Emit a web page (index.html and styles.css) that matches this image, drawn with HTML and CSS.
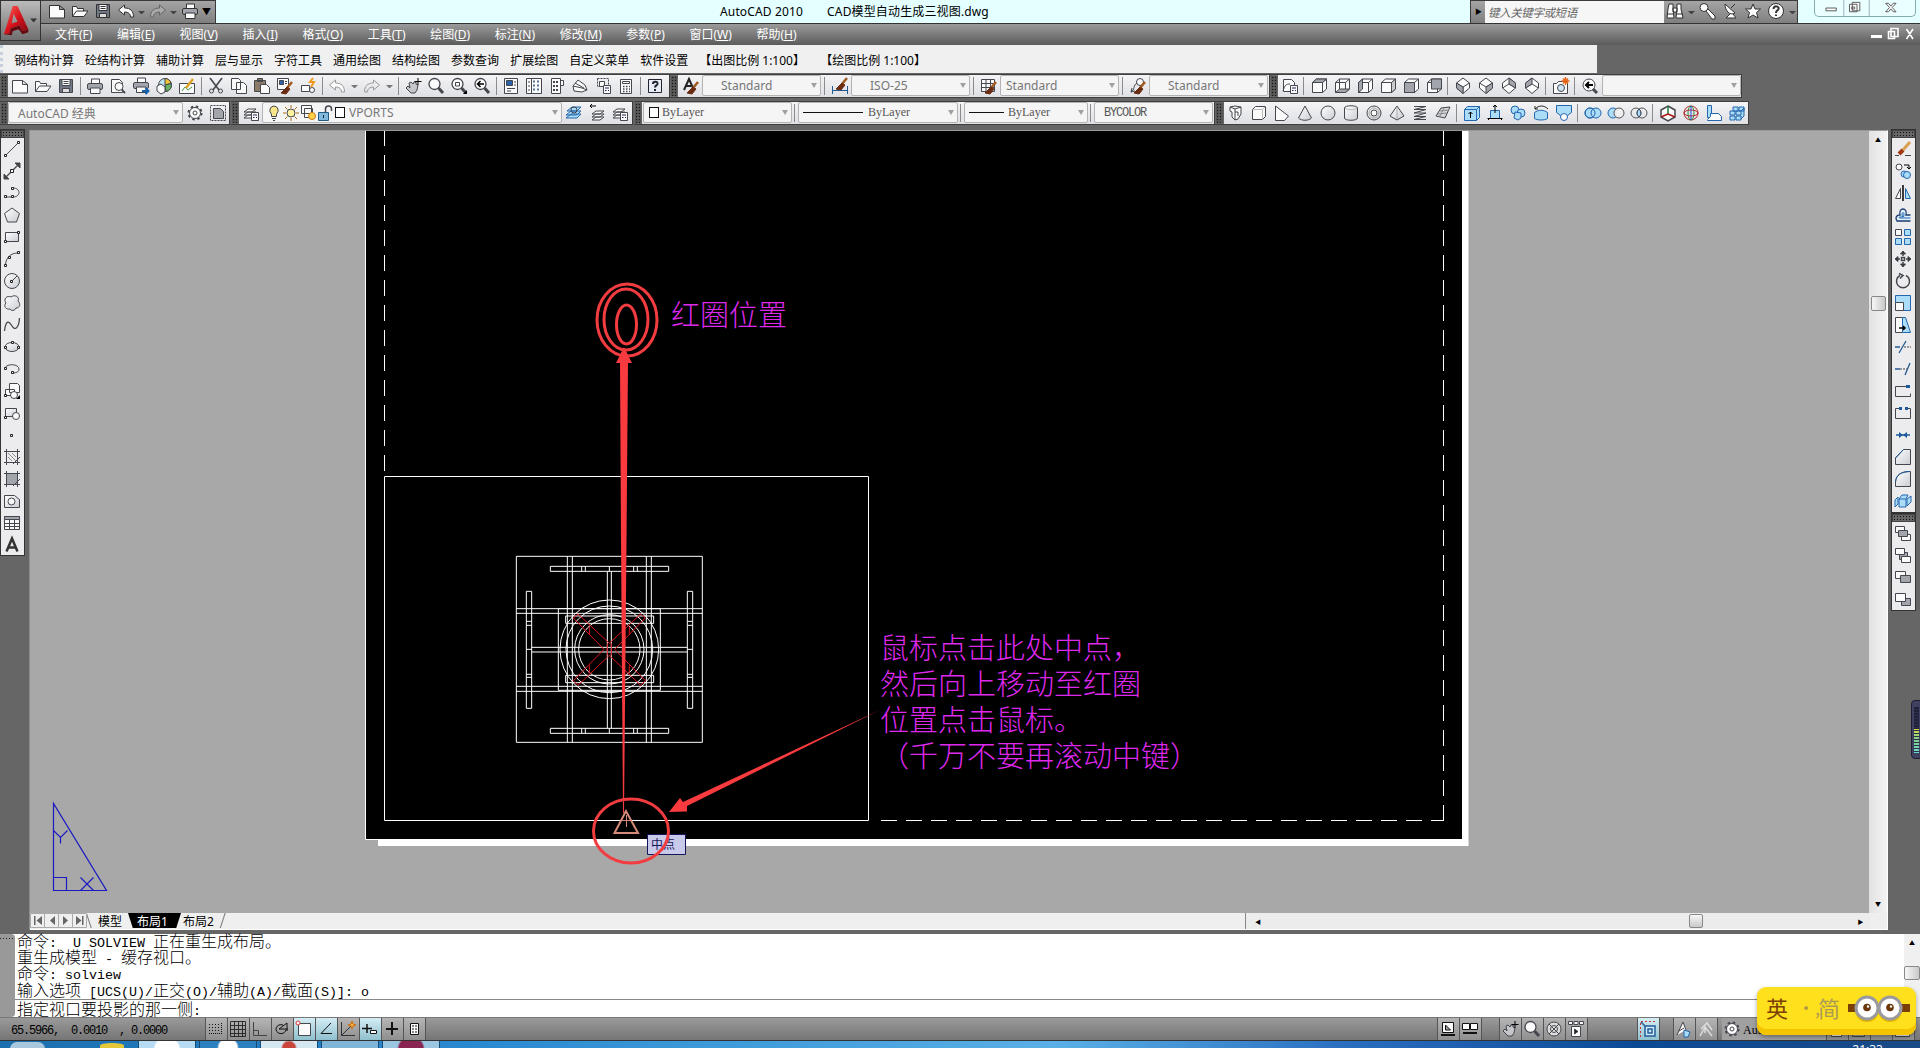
FILE: index.html
```html
<!DOCTYPE html>
<html lang="zh-CN">
<head>
    <meta charset="UTF-8">
    <title>AutoCAD 2010 - CAD模型自动生成三视图.dwg</title>
    <link rel="stylesheet" href="styles.css">
</head>
<body>
    <!-- shared icons -->
    <svg class="defs">
        <defs>
            <linearGradient id="logoRed" x1="0" y1="0" x2="1" y2="1"><stop offset="0" stop-color="#ff6a5e"/><stop offset=".5" stop-color="#d8121c"/><stop offset="1" stop-color="#7c0a10"/></linearGradient>
            <linearGradient id="shade" x1="0" y1="0" x2="1" y2="1"><stop offset="0" stop-color="#fff"/><stop offset="1" stop-color="#c9ccd2"/></linearGradient>
        </defs>
        <g id="new"><path class="w" d="M.5 2.500h10l5 4v8.500h-15zM10.500 2.500v4h5"/></g>
        <g id="open"><path class="w" d="M.5 13.500v-10h4l1 2h6v3"/><path class="w" d="M.5 13.500l4-5.500h11.500l-4 5.500z"/></g>
        <g id="save"><path fill="#6f7684" d="M1.500 1.500h13v13h-13z"/><path class="w" d="M4 1.500h8v6h-8z"/><path fill="#ddd" d="M4.500 10.500h7v4h-7z"/><path d="M5.500 3.500h5M5.500 5.500h5"/></g>
        <g id="print"><path class="w" d="M4.500 6v-5h8v5"/><rect class="g" x=".5" y="5.500" width="15" height="6" rx="1.500"/><path class="w" d="M3.500 10h9.500v5.500h-9.500z"/></g>
        <g id="undo"><path class="w" d="M.5 7l6-5v3c6 0 9 3 9 9h-3c0-3-2-5-6-5v3z"/></g>
        <g id="redo"><path d="M15.500 7l-6-5v3c-6 0-9 3-9 9h3c0-3 2-5 6-5v3z"/></g>
        <g id="glass"><circle class="w" cx="6.500" cy="6" r="5.500" stroke-width="1.300"/><path stroke-width="3" d="M10.500 10l4.500 5"/></g>
        <g id="pan"><path fill="#c4c6ca" d="M1 10l2-2 2 2-1-5 2-1 2 2 1-2 2 0 0 2 2 1-1 5-2 3H6z"/><path stroke="#000" d="M13 0v7M9.500 3.500h7"/></g>
        <g id="brush"><path stroke="#a05a20" stroke-width="2.500" d="M15 4l-5 6"/><path fill="#6a2c10" stroke="#6a2c10" d="M10 9l3 2-4 5-5-1z"/></g>
        <g id="gear"><circle cx="8" cy="8" r="6.500" stroke-width="2" stroke-dasharray="2.500 2.600"/><circle class="w" cx="8" cy="8" r="5.500"/><circle cx="8" cy="8" r="2"/></g>
        <g id="layers"><path class="w" d="M1 13l4-3h8l-4 3zM1 10l4-3h8l-4 3zM1 7l4-3h8l-4 3z"/></g>
        <g id="card"><path class="w" d="M8.500 7.500h7v8h-7z"/><path stroke="#225" d="M10 10h4M10 12.500h1.500M13 12.500h1"/></g>
        <g id="cube"><path class="w" d="M1.500 4.500h10v10h-10zM1.500 4.500l4-3.500h10v10l-4 3.500M11.500 4.500l4-3.500"/></g>
        <g id="dia"><path class="w" d="M8 0l6.500 5v5L8 15.500 1.500 10V5z"/></g>
    </svg>

    <header class="titlebar">
        <div class="quick">
            <svg class="i"><use href="#new"/></svg><svg class="i"><use href="#open"/></svg><svg class="i"><use href="#save"/></svg><svg class="i"><use href="#undo"/></svg><i class="dd"></i><svg class="i off"><use href="#redo"/></svg><i class="dd"></i><svg class="i"><use href="#print"/></svg><b class="more">▼</b>
        </div>
        <div class="caption"><span>AutoCAD 2010</span><span>CAD模型自动生成三视图.dwg</span></div>
        <div class="search">
            <b>▶</b>
            <div class="field">键入关键字或短语</div>
            <svg class="i"><path class="w" d="M2 1h4v5l1 9H0l1-9zM10 1h4v5l2 9H9l1-9zM6 5h4v4H6zM0 11h7M9 11h7"/></svg><i class="dd"></i>
            <svg class="i"><circle class="w" cx="5" cy="4.500" r="4"/><path class="w" d="M7 8l6 8h3v-3L9 6z"/></svg>
            <svg class="i"><path class="w" d="M3 1l10 9c-5 3-10-2-10-9zM8 11l-4 4h10l-3-4M9 5l4-4"/></svg>
            <svg class="i"><path class="w" d="M8 1l2 5h5.500l-4 3.500 1.500 5.500-5-3-5 3 1.500-5.500L.5 6H6z"/></svg>
            <svg class="i"><circle class="w" cx="8" cy="8" r="7.500"/><path stroke-width="2" d="M5.500 6c0-4 6-3 5 0-.5 1.500-2.500 1.500-2.500 4M8 11.500v1.500"/></svg><i class="dd"></i>
        </div>
        <div class="winbtns">
            <svg viewBox="0 0 102 17"><path d="M28.500 0v17M55.500 0v17" stroke="#9ab"/><path class="w" d="M9.500 8.500h11v3h-11zM37.500 2.500h8v9h-8zM34.500 4.500h8v8h-8zM37 7.500h3v2h-3z"/><path class="w" d="M73 3.500h3l2.500 3 2.500-3h3l-4 4.500 4 4.500h-3l-2.500-3-2.500 3h-3l4-4.500z"/></svg>
        </div>
    </header>
    <div class="appbtn">
        <svg viewBox="0 0 40 40"><path fill="url(#logoRed)" d="M3 34l9-29h5l11 24-6 2-3-6-9 3-1 5zM11 23l6-2-4-8z" fill-rule="evenodd"/><path fill="#650910" d="M3 34l6-1 1-5 9-3 3 6 6-2v3l-6 2-4-5-6 2-1 4z"/><path fill="#333" d="M30 18h7l-3.500 4z"/></svg>
    </div>

    <nav class="menubar">
        <span>文件(<u>F</u>)</span><span>编辑(<u>E</u>)</span><span>视图(<u>V</u>)</span><span>插入(<u>I</u>)</span><span>格式(<u>O</u>)</span><span>工具(<u>T</u>)</span><span>绘图(<u>D</u>)</span><span>标注(<u>N</u>)</span><span>修改(<u>M</u>)</span><span>参数(<u>P</u>)</span><span>窗口(<u>W</u>)</span><span>帮助(<u>H</u>)</span>
        <svg class="docbtns" viewBox="0 0 52 16"><path fill="#fff" d="M3 9h11v3H3z"/><path stroke="#fff" stroke-width="1.600" fill="none" d="M23 2.500h7v8h-7zM20.500 5.500h6v7h-6zM38.500 3l6.500 10M45 3l-6.500 10"/></svg>
    </nav>

    <nav class="plugins">
        <span>钢结构计算</span><span>砼结构计算</span><span>辅助计算</span><span>层与显示</span><span>字符工具</span><span>通用绘图</span><span>结构绘图</span><span>参数查询</span><span>扩展绘图</span><span>自定义菜单</span><span>软件设置</span><span class="ratio">【出图比例 1:100】</span><span class="ratio">【绘图比例 1:100】</span>
    </nav>

    <div class="dock first">
        <div class="bar std">
            <i class="grip"></i>
            <svg class="i"><use href="#new"/></svg><svg class="i"><use href="#open"/></svg><svg class="i"><use href="#save"/></svg><i class="sep"></i>
            <svg class="i"><use href="#print"/></svg>
            <svg class="i"><path class="w" d="M1.500 1.500h8l3 3v10h-11z"/><circle class="w" cx="9" cy="8.500" r="4"/><path stroke-width="2" d="M12 12l3 3"/></svg>
            <svg class="i"><g transform="translate(0,-1)"><use href="#print"/></g><path stroke="#1560b0" stroke-width="2" d="M9 13h6M12.500 10l3 3-3 3"/></svg>
            <svg class="i"><circle cx="9" cy="7" r="6.500" fill="#bfe3ee"/><path fill="#f3c33a" d="M9 7V.5a6.500 6.500 0 0 1 6 5z"/><path fill="#67b45d" d="M9 7l6-1.500a6 6 0 0 1-5 8z"/><path class="w" d="M1 8l4-2 4 3v5l-4 2-4-3z"/></svg>
            <svg class="i"><path class="w" d="M.5 5.500h15v10H.5z"/><path stroke="#3d9b45" d="M3 13l3-4 3 3 4-3"/><path stroke="#e0a32a" stroke-width="2.500" d="M14 1L7 10"/></svg><i class="sep"></i>
            <svg class="i"><path stroke-width="1.600" d="M2 0l9 12M14 0L5 12"/><circle cx="3.500" cy="13" r="2"/><circle cx="12.500" cy="13" r="2"/></svg>
            <svg class="i"><path class="w" d="M.5.500h7l2 2v9h-9zM5.500 4.500h7l3 3v8h-10z"/></svg>
            <svg class="i"><path fill="#8c7b66" d="M.5 2.500h11v11H.5zM3.500.500h5v3h-5z"/><path class="w" d="M6.500 6.500h6l3 3v6h-9z"/></svg>
            <svg class="i"><path class="w" d="M.5.500h11v11H.5z"/><path fill="#2c63a8" d="M2.500 2.500h4v4h-4z"/><path d="M8 3.500h2M8 5.500h2"/><use href="#brush"/></svg>
            <svg class="i"><path class="w" d="M1.500 7.500h8v6h-8z"/><circle class="w" cx="12" cy="12" r="2.500"/><path stroke="#f09a20" stroke-width="2" d="M13 0l-3 4h4l-3 5"/></svg><i class="sep"></i>
            <svg class="i off"><use href="#undo"/></svg><i class="dd"></i><svg class="i off"><use href="#redo"/></svg><i class="dd"></i><i class="sep"></i>
            <svg class="i"><use href="#pan"/></svg><svg class="i"><use href="#glass"/></svg>
            <svg class="i"><use href="#glass"/><path d="M4.500 4.500h4v3.500h-4z"/><path fill="#000" stroke="none" d="M16 12v4h-4z"/></svg>
            <svg class="i"><use href="#glass"/><path stroke="#000" stroke-width="1.500" d="M10 6H4M6.500 3L3.500 6l3 3"/></svg><i class="sep"></i>
            <svg class="i"><path class="w" d="M1.500.500h13v15h-13z"/><path fill="#2c63a8" d="M3.500 2.500h6v5h-6z"/><path d="M11 4h2M11 7h2M4 10.500h8M4 13h4"/></svg>
            <svg class="i"><path class="w" d="M.5.500h15v15H.5z"/><path stroke="#59759a" stroke-width="2" stroke-dasharray="2 2" d="M7 3.500h8M7 7.500h8M7 11.500h8"/><path d="M5.500.500v15M2 4h2M2 8h2M2 12h2"/></svg>
            <svg class="i"><path class="w" d="M2.500.500h9v15h-9zM11.500 2.500h3v5h-3z"/><path stroke-width="2" stroke-dasharray="2 1" d="M4 4h6M4 8h6M4 12h6"/></svg>
            <svg class="i"><path class="w" d="M1 8l5-6 7 5 2 5-5 2-8-1zM1 8l9 2 5 2M3 5l9 5"/></svg>
            <svg class="i"><path stroke-dasharray="2 1" d="M2.500.500h11v8h-11z"/><path class="w" d="M4.500 3.500h5v5h-5z"/><use href="#card"/></svg>
            <svg class="i"><path class="w" d="M2.500 1.500h11v14h-11z"/><path d="M4.500 3.500h7v2h-7z"/><path stroke-width="1.500" stroke-dasharray="1.500 1.500" d="M5 8.500h7M5 11h7M5 13.500h7"/></svg><i class="sep"></i>
            <svg class="i"><path fill="#e8ecf5" stroke="#223" d="M1.500 1.500h13v13h-13z"/><path stroke="#223" stroke-width="2" d="M6 6c0-3 5-3 4.500 0-.5 1.500-2.500 1.500-2.500 3.500M8 11v2"/></svg>
        </div>
        <div class="bar styles">
            <i class="grip"></i>
            <svg class="i"><path stroke="#222" stroke-width="2" d="M1 12L6 1l4 9M3 8h5"/><use href="#brush"/></svg><div class="combo pad">Standard</div><i class="sep"></i>
            <svg class="i"><path stroke="#245a94" d="M.5 8v8M15.500 8v8M1 12.500h14"/><g transform="translate(0,-4)"><use href="#brush"/></g></svg><div class="combo pad">ISO-25</div><i class="sep"></i>
            <svg class="i"><path class="w" d="M.5 1.500h13v12H.5zM.5 5.500h13M.5 9.500h13M5 1.500v12M9.500 1.500v12"/><use href="#brush"/></svg><div class="combo">Standard</div><i class="sep"></i>
            <svg class="i"><circle class="w" cx="10" cy="4" r="3.500"/><path d="M7 5c-4 2-2 7-6 9M1 14l1-4M1 14l4-1"/><use href="#brush"/></svg><div class="combo pad">Standard</div>
        </div>
        <div class="bar views">
            <i class="grip"></i>
            <svg class="i"><path class="w" d="M1.500 1.500h8l3 3v9h-11z"/><path d="M1 13c2-6 3-7 7-7"/><use href="#card"/></svg><i class="sep"></i>
            <svg class="i"><use href="#cube"/><path class="g" d="M1.500 4.500l4-3.500h10l-4 3.500z"/></svg>
            <svg class="i"><use href="#cube"/><path class="g" d="M1.500 14.500l4-3.500h10l-4 3.500z"/><path d="M5.500 1v10"/></svg>
            <svg class="i"><use href="#cube"/><path class="g" d="M1.500 4.500l4-3.500v10l-4 3.500z"/></svg>
            <svg class="i"><use href="#cube"/><path fill="#ccc" d="M11.500 4.500l4-3.500v10l-4 3.500z"/></svg>
            <svg class="i"><use href="#cube"/><path class="g" d="M1.500 4.500h10v10h-10z"/></svg>
            <svg class="i"><use href="#cube"/><path class="g" d="M5.500 1h10v10h-10z"/></svg><i class="sep"></i>
            <svg class="i"><use href="#dia"/><path d="M1.500 5L8 9l6.500-4M8 9v6"/><path class="g" d="M1.500 5L8 9v6.500L1.500 10z"/></svg>
            <svg class="i"><use href="#dia"/><path d="M1.500 5L8 9l6.500-4"/><path class="g" d="M14.500 5L8 9v6.500l6.500-5.500z"/></svg>
            <svg class="i"><use href="#dia"/><path d="M1.500 10L8 6l6.500 4"/><path class="g" d="M8 0v6l6.500 4V5z"/></svg>
            <svg class="i"><use href="#dia"/><path d="M1.500 10L8 6l6.500 4"/><path class="g" d="M8 0v6l-6.500 4V5z"/></svg><i class="sep"></i>
            <svg class="i"><path class="w" d="M.5 5.500h3l2-2h9v12H.5z"/><circle fill="#cfe4f5" cx="8" cy="10" r="3.500"/><path stroke="#e8661a" stroke-width="1.500" d="M12.500-1v8M8.500 3h8M10 .5l5 5M15 .5l-5 5"/></svg><i class="sep"></i>
            <svg class="i"><circle class="w" cx="7" cy="7" r="6"/><path stroke="#000" stroke-width="2" d="M11 7H4M7 4L4 7l3 3"/><path stroke-width="3" d="M11 11l4 4"/></svg>
            <div class="combo wide"></div>
        </div>
    </div>

    <div class="dock">
        <div class="bar space">
            <i class="grip"></i>
            <div class="combo cjk">AutoCAD 经典</div>
            <svg class="i"><use href="#gear"/></svg>
            <svg class="i"><path stroke-dasharray="2 1" d="M.5.500h15v15H.5z"/><path class="g" d="M3.500 3.500h7l3 3v7h-10z"/></svg>
        </div>
        <div class="bar layer">
            <i class="grip"></i>
            <svg class="i"><use href="#layers"/><use href="#card"/></svg>
            <div class="combo layers">
                <svg class="s"><path fill="#fbe58a" d="M8 1a4.500 4.500 0 0 0-2.500 8v2.500h5V9A4.500 4.500 0 0 0 8 1zM6 13.500h4M7 15.500h2"/></svg>
                <svg class="s"><circle cx="8" cy="8" r="4" fill="#fff3a0"/><path stroke="#b06a10" d="M8 0v3M8 13v3M0 8h3M13 8h3M2 2l2.500 2.500M11.500 11.500L14 14M14 2l-2.500 2.500M4.500 11.500L2 14"/></svg>
                <svg class="s"><path class="w" d="M1.500.500h10v8h-10zM4.500 3.500h8v9h-8z"/><circle cx="12" cy="11" r="3.500" fill="#ffd34a" stroke="#d07a10"/></svg>
                <svg class="s"><path d="M8.500 7V4c0-4 6-4 6 0v2" stroke-width="1.500"/><path fill="#7fb9dd" stroke="#245a80" d="M1.500 7.500h10v8h-10z"/><path stroke="#123" d="M6.500 10v3"/></svg>
                <em></em><span>VPORTS</span>
            </div>
            <svg class="i"><g class="b"><path d="M0 13l5-4h10l-4 4zM0 10l5-4h10l-4 4zM1 6l5-4h9l-4 4z"/></g><circle cx="8" cy="5" r="3"/></svg>
            <svg class="i"><g transform="translate(2,2)"><use href="#layers"/></g><path stroke="#000" d="M7 1H1M3-1L1 1l2 2"/></svg>
            <svg class="i"><use href="#layers"/><use href="#card"/></svg>
        </div>
        <div class="bar props">
            <i class="grip"></i>
            <div class="combo song color"><em></em>ByLayer</div><i class="sep"></i>
            <div class="combo song linetype"><hr>ByLayer</div><i class="sep"></i>
            <div class="combo song weight"><hr>ByLayer</div><i class="sep"></i>
            <div class="combo song plot">BYCOLOR</div>
        </div>
        <div class="bar solids">
            <i class="grip"></i>
            <svg class="i"><path class="w" d="M2 2l5 2v11L4 12V7L2 6zM7 4l6-2v7l-3 5-3 1M2 2l5-1 6 1M7 7h3v4"/></svg>
            <svg class="i"><path class="w" d="M1.500 4.500l3-3h10v10l-3 3h-10z"/><path stroke="#bbb" d="M1.500 4.500h10v10M11.500 4.500l3-3"/></svg>
            <svg class="i"><path class="w" d="M1.500 1l13 10-4 4.500h-9z"/></svg>
            <svg class="i"><path fill="url(#shade)" d="M8 1l6.500 12c-3 3-10 3-13 0z"/></svg>
            <svg class="i"><circle fill="url(#shade)" cx="8" cy="8" r="7"/></svg>
            <svg class="i"><path fill="url(#shade)" d="M1.500 3c0-3 13-3 13 0v10c0 3-13 3-13 0z"/><path stroke="#bbb" d="M2 3c0 2 12 2 12 0"/></svg>
            <svg class="i"><circle fill="url(#shade)" cx="8" cy="8" r="7"/><circle class="w" cx="8" cy="8" r="3"/><circle stroke="#aaa" cx="8" cy="8" r="5"/></svg>
            <svg class="i"><path fill="url(#shade)" d="M8 1l7 10-7 4-7-4z"/><path stroke="#aaa" d="M8 2v12"/></svg>
            <svg class="i"><path d="M2 1.500h12M14 1.500l-12 3h12l-12 3.500h12l-12 3.500h12l-12 3h12"/></svg>
            <svg class="i"><path fill="#d4d6da" d="M1 11l5-8 9-1-5 11z"/><path stroke="#888" d="M3 9l9-1M5 6l9-1M9 3l-4 8"/></svg><i class="sep"></i>
            <svg class="i b"><path d="M.5 4.500l3-3h12v11l-3 3H.5zM.5 4.500h12v11M12.500 4.500l3-3"/><path stroke="#000" d="M6.500 13V7M4.500 9l2-2 2 2"/></svg>
            <svg class="i b"><path d="M3.500 5.500h9v8h-9z"/><path stroke="#000" d="M.5 13.500h15M8 8V0M6 2l2-2 2 2M3 13l-2 2M13 13l2 2"/></svg>
            <svg class="i b"><circle cx="5" cy="5" r="4"/><circle cx="11" cy="8" r="4"/><path d="M5 7l6 1v5l-3 2-4-2z"/></svg>
            <svg class="i b"><path d="M1.500 7.500c4-3 9-3 13 0v6c-3 2-10 2-13 0z"/><path fill="none" stroke="#222" d="M2 4c4-4 9-4 13 0M2 4V1M2 4h3"/></svg>
            <svg class="i b"><path d="M.5.500h15v7l-4 3h-7l-4-3z"/><circle class="w" cx="8" cy="12" r="3.500"/></svg><i class="sep"></i>
            <svg class="i b"><circle cx="5" cy="8" r="5"/><circle cx="11" cy="8" r="5"/><circle cx="5" cy="8" r="5" fill="none"/></svg>
            <svg class="i b"><circle cx="5" cy="8" r="5"/><circle cx="11" cy="8" r="5" fill="#eee" stroke="#555"/></svg>
            <svg class="i b"><path d="M8 4a5 5 0 0 1 0 8 5 5 0 0 1 0-8"/><circle cx="5" cy="8" r="5" fill="none" stroke="#555"/><circle cx="11" cy="8" r="5" fill="none" stroke="#555"/></svg><i class="sep"></i>
            <svg class="i"><path class="w" stroke-width="1.500" d="M8 1l7 4v7l-7 4-7-4V5z"/><path stroke="#1a7a40" stroke-width="1.500" d="M8 1v8"/><path stroke="#b01818" stroke-width="1.500" d="M8 9l7 3M8 9l-7 3"/></svg>
            <svg class="i"><circle cx="8" cy="8" r="7" stroke="#b02828"/><ellipse cx="8" cy="8" rx="3" ry="7" stroke="#2a9040"/><ellipse cx="8" cy="8" rx="7" ry="3" stroke="#b02828"/><path stroke="#24c" d="M8 1v14"/></svg>
            <svg class="i b"><path d="M1.500.500h4v12h-4z"/><path class="w" d="M1.500 14.500l3-3v-3h8l3 3v4h-14z"/></svg>
            <svg class="i b"><path d="M1 6h5v4H1zM7 6h5v4H7zM1 11h5v4H1zM7 11h5v4H7zM4 2h5v4H4zM10 2h5v4h-5zM12 6l3-3v8l-3 3"/></svg>
        </div>
    </div>

    <main class="work">
        <aside class="side draw">
            <i class="hgrip"></i>
            <svg class="i"><path d="M2 14L14 2"/><path class="n" d="M.5 13.500h2v2h-2zM13.500.500h2v2h-2z"/></svg>
            <svg class="i"><path d="M1 15L15 1" stroke-width="1.300"/><path fill="#444" d="M0 16v-5l5 5zM16 0v5l-5-5z"/><path class="n" d="M6.500 6.500h3v3h-3z"/></svg>
            <svg class="i"><path d="M1 12h8c8 0 8-9 0-9"/><path class="n" d="M.5 10.500h2v2h-2zM7.500 10.500h2v2h-2zM7.500 2.500h2v2h-2z"/></svg>
            <svg class="i"><path fill="url(#shade)" d="M8 1l7.500 5.500-3 8.500h-9l-3-8.500z"/></svg>
            <svg class="i"><path fill="url(#shade)" d="M1.500 3.500h13v9h-13z"/><path class="n" d="M.5 11.500h2v2h-2zM13.500 2.500h2v2h-2z"/></svg>
            <svg class="i"><path d="M1.500 14C2 6 7 2 14 2"/><path class="n" d="M.5 13.500h2v2h-2zM4.500 5.500h2v2h-2zM13.500.500h2v2h-2z"/></svg>
            <svg class="i"><circle fill="url(#shade)" cx="8" cy="8" r="7.500"/><path d="M8 8l5-5"/><path class="n" d="M6.500 7.500h2v2h-2z"/></svg>
            <svg class="i"><path fill="url(#shade)" d="M2 8C-1 4 3 0 7 2c4-3 9 0 7 4 3 3 2 7-2 7-1 3-5 3-6 1-4 1-7-3-4-6z"/></svg>
            <svg class="i"><path stroke-width="1.300" d="M.5 14C2 2 5 4 8 9s7 2 7.500-8"/></svg>
            <svg class="i"><ellipse fill="url(#shade)" cx="8" cy="8" rx="7" ry="4.500"/><path class="n" d="M.5 7.500h2v2h-2zM7.500 2.500h2v2h-2zM13.500 7.500h2v2h-2z"/></svg>
            <svg class="i"><path d="M1 7c2-5 14-4 14 1 0 3-3 4-6 4"/><path class="n" d="M.5 6.500h2v2h-2zM7.500 10.500h2v2h-2z"/></svg>
            <svg class="i"><path class="w" d="M5.500.500h8l2 2v7h-10zM1.500 6.500h9v6h-9z"/><circle class="w" cx="10" cy="12" r="3.500"/><path class="n" d="M.5 11.500h2v2h-2z"/><path fill="#000" stroke="none" d="M16 12v4h-4z"/></svg>
            <svg class="i"><path fill="url(#shade)" d="M1.500 3.500h11v8h-11z"/><circle class="w" cx="12" cy="11" r="3.500"/><path class="n" d="M.5 11.500h2v2h-2z"/></svg>
            <svg class="i"><path class="n" d="M6.500 7.500h2v2h-2z"/></svg>
            <svg class="i"><path d="M2.500 0v16M13.500 0v16M0 2.500h16M0 13.500h16M9 15l7-7"/><path stroke="#777" stroke-width=".8" d="M4 8l4 4M4 4l8 8M8 4l4 4"/></svg>
            <svg class="i"><path class="g" d="M2.500 2.500h11v11h-11z"/><path d="M2.500 0v16M13.500 0v16M0 2.500h16M0 13.500h16M9 15l7-7"/></svg>
            <svg class="i"><path fill="url(#shade)" d="M.5 2.500h10l5 4v8H.5z"/><circle class="w" cx="7.500" cy="8.500" r="3.500"/></svg>
            <svg class="i"><path class="w" d="M.5 1.500h15v13H.5zM.5 8.500h15M.5 11.500h15M5.500 4v10.500M10.500 4v10.500"/><path class="g" d="M.5 1.500h15v3H.5z"/></svg>
            <svg class="i"><path stroke="#333" stroke-width="2.500" d="M2.500 14.500L8 1.500l5.500 13M5 10.500h6"/></svg>
        </aside>

        <section class="view">
            <div class="canvasrow">
                <svg class="canvas" viewBox="30 131 1839 782">
                    <!-- paper -->
                    <path fill="#fff" d="M378 130h1090.500v716H378z"/>
                    <path fill="#000" d="M365 130h1097v709H365z"/>
                    <path class="ln" d="M365.500 130v709.500h14"/>
                    <path class="ln" stroke-dasharray="16 9" d="M384.500 130v346M1443.500 130v690M881 820.500h563"/>
                    <path class="ln" d="M384.500 476.500h484v344h-484z"/>
                    <!-- flange view, drawn on a 3x grid -->
                    <g class="part" transform="translate(500 540) scale(.33333)">
                        <path d="M49 49h558v558H49zM49 206h558M49 220h558M49 439h558M49 454h558M202 49v558M217 49v558M439 49v558M454 49v558"/>
                        <path d="M151 79h355v15H151zM245 79v15M256 79v15M328 79v15M401 79v15M412 79v15M151 565h355v15H151zM245 565v15M256 565v15M328 565v15M401 565v15M412 565v15"/>
                        <path d="M79 154h16v351H79zM79 244h16M79 256h16M79 328h16M79 403h16M79 412h16M562 154h16v351h-16zM562 244h16M562 256h16M562 328h16M562 403h16M562 412h16"/>
                        <path d="M322 94v471M334 94v471M95 322h467M95 336h467M175 206h306v245H175zM197 228h264v22H197zM197 406h264v22H197z"/>
                        <circle cx="328" cy="328" r="148"/><circle cx="328" cy="328" r="130"/><circle cx="328" cy="328" r="104"/><circle cx="328" cy="328" r="92"/>
                        <path class="red" d="M220 234l14-12 94 88 94-88 14 12-92 94 92 94-14 14-94-90-94 90-14-14 92-94zM268 260v24M388 260v24M268 376v24M388 376v24M322 310v36M334 310v36"/>
                    </g>
                    <!-- snap marker -->
                    <path fill="none" stroke="#d58b78" stroke-width="2" d="M626 811l-11.500 22h23.500z"/>
                    <path fill="none" stroke="#d58b78" d="M626.500 815v12M621 820.500h11"/>
                    <!-- tooltip -->
                    <path fill="#c9c9ea" stroke="#14145a" d="M647.500 834.500h38v20h-38z"/>
                    <text class="tip" x="651" y="848.500">中点</text>
                    <!-- annotations -->
                    <g fill="none" stroke="#f23c40" stroke-width="3">
                        <ellipse cx="627" cy="320" rx="30" ry="36"/>
                        <ellipse cx="626" cy="319.500" rx="22" ry="30.500"/>
                        <ellipse cx="626.500" cy="324.500" rx="10" ry="19.500"/>
                        <ellipse cx="631" cy="831" rx="37.500" ry="32"/>
                    </g>
                    <path fill="#f93a3e" d="M624 347l8 16h-4l-1.500 180-2.500 270h-1l-2-270-1-180h-4z"/>
                    <path fill="#f93a3e" d="M669 812l11-14 3 4L881 709.500 687 806v5.500z"/>
                    <text class="note" x="671" y="326">红圈位置</text>
                    <text class="note" x="880" y="659">鼠标点击此处中点，</text>
                    <text class="note" x="880" y="695">然后向上移动至红圈</text>
                    <text class="note" x="880" y="731">位置点击鼠标。</text>
                    <text class="note" x="880" y="767">（千万不要再滚动中键）</text>
                    <!-- ucs icon -->
                    <path fill="none" stroke="#1a1ac0" stroke-width="1.200" d="M53.500 803.500v87h53zM53.500 877.500h13v13M80.500 877.500l13 13M93.500 877.500l-13 13M53.500 830.500l7 7 7-7M60.500 837.500v6"/>
                </svg>
                <div class="vscroll"><b>▲</b><i></i><b>▼</b></div>
            </div>
            <div class="tabs">
                <svg class="tabnav" viewBox="0 0 57 15"><path fill="none" stroke="#aaa" d="M.5.500h56v14H.5zM14.500 0v15M28.500 0v15M42.500 0v15"/><path fill="#666" d="M4 3h1.500v9H4zM12 3v9L6.500 7.500zM25 3v9l-5-4.500zM33 3v9l5-4.500zM46 3v9l5.500-4.500zM52 3h1.500v9H52z"/></svg>
                <span class="tab">模型</span><span class="tab active">布局1</span><span class="tab last">布局2</span>
                <div class="hscroll"><b>◀</b><i></i><b>▶</b></div>
            </div>
        </section>

        <div class="right">
            <aside class="side">
                <i class="hgrip"></i>
                <svg class="i"><path stroke="#d8a050" stroke-width="3" d="M15 1L8 9"/><path stroke="#a03810" stroke-width="4" d="M8 9l-4 4"/><path d="M0 14.500h4M10 14.500h6"/></svg>
                <svg class="i"><circle class="w" cx="4" cy="4" r="3"/><path stroke="#000" d="M9 2h5v4M12 4l2 2 2-2"/><g class="b"><circle cx="9" cy="11" r="3"/><circle cx="12" cy="12" r="3.500"/></g></svg>
                <svg class="i"><path class="w" d="M.5 13.500l5-10v10z"/><path stroke="#000" stroke-width="1.500" d="M8 0v16"/><path class="b" d="M15.500 13.500l-5-10v10z"/></svg>
                <svg class="i"><path stroke="#1a3a70" stroke-width="1.300" fill="#dff0ff" d="M15.500 14H2c-2-3-1-6 3-6C3 0 13 0 11 8h4.500"/><path stroke="#2467ae" d="M15.500 11H4.500c-1-1 0-1 3-1-2-6 3-6 1 0"/></svg>
                <svg class="i"><path class="w" d="M.5.500h6v6h-6z"/><path class="b" d="M9.500.500h6v6h-6zM.5 9.500h6v6h-6zM9.500 9.500h6v6h-6z"/></svg>
                <svg class="i"><path fill="#333" d="M8 0l2.500 3h-5zM8 16l2.500-3h-5zM0 8l3-2.500v5zM16 8l-3-2.500v5z"/><path stroke-width="1.500" d="M8 3v2M8 11v2M3 8h2M11 8h2M6.500 6.500h3v3h-3z"/></svg>
                <svg class="i"><path stroke-width="1.500" d="M5 2.500a6.500 6.500 0 1 0 6 0M4 .5l4 2-3 3"/></svg>
                <svg class="i"><path class="b" d="M.5.500h15v15H8v-8H.5z"/><path class="w" d="M.5 7.500h8v8h-8z"/></svg>
                <svg class="i"><path class="w" d="M.5.500h7v15h-7z"/><path class="b" d="M7.500.500h3l5 15h-8z"/><path stroke="#000" stroke-width="1.500" d="M4 11h6M8 9l2 2-2 2"/></svg>
                <svg class="i"><path stroke="#24598f" stroke-width="1.300" d="M0 8h5M4 14l7-12"/><path stroke-dasharray="2 1" d="M9 8h7"/></svg>
                <svg class="i"><path stroke-dasharray="2 1" d="M5 8h7"/><path stroke="#24598f" stroke-width="1.300" d="M0 8h5M10 14l5-12"/></svg>
                <svg class="i"><path d="M11 3.500H.5v10h15v-3"/><path fill="#1c5a9c" stroke="none" d="M11 2h4v3h-4z"/></svg>
                <svg class="i"><path d="M4 3.500H.5v10h15v-10H12"/><path fill="#1c5a9c" stroke="none" d="M4 2h3v3H4zM10 2h3v3h-3z"/></svg>
                <svg class="i"><path stroke="#1c5a9c" stroke-width="1.500" d="M1 8h14"/><path fill="#1c5a9c" stroke="none" d="M8 8L4 5v6zM8 8l4-3v6z"/></svg>
                <svg class="i"><path fill="url(#shade)" d="M.5 9l8-8.500h7v15H.5z"/><path stroke="#1c5a9c" d="M.5 9l8-8.500"/></svg>
                <svg class="i"><path fill="url(#shade)" d="M.5 15.500V11C1 4 6 .5 15.500.500v15z"/><path stroke="#1c5a9c" d="M.5 11C1 4 6 .5 15 .500"/></svg>
                <svg class="i"><path class="b" d="M0 7l3-3v7l-3 3zM4 6h7v8H4zM4 6l3-4h6l-2 4M12 6l4-3v6l-4 4z"/></svg>
            </aside>
            <aside class="side order">
                <i class="hgrip"></i>
                <svg class="i"><path class="w" d="M.5 1.500h9v6h-9zM6.500 9.500h9v6h-9z"/><path class="g" d="M3.500 5.500h9v6h-9z"/></svg>
                <svg class="i"><path class="g" d="M4.500 5.500h8v7h-8z"/><path class="w" d="M.5 1.500h9v6h-9zM6.500 9.500h9v6h-9z"/></svg>
                <svg class="i"><path class="w" d="M.5 2.500h10v7H.5z"/><path class="g" d="M5.500 6.500h10v7h-10z"/></svg>
                <svg class="i"><path class="g" d="M6.500 7.500h9v7h-9z"/><path class="w" d="M.5 2.500h10v8H.5z"/></svg>
            </aside>
        </div>
    </main>

    <section class="command">
        <div class="cmdgrip"></div>
        <div class="cmdtext">
            <p>命令<s>:  U SOLVIEW </s>正在重生成布局。</p>
            <p>重生成模型<s> - </s>缓存视口。</p>
            <p>命令<s>: solview</s></p>
            <p>输入选项<s> [UCS(U)/</s>正交<s>(O)/</s>辅助<s>(A)/</s>截面<s>(S)]: o</s></p>
            <p class="prompt">指定视口要投影的那一侧<s>:</s></p>
        </div>
        <div class="cmdscroll"><b>▲</b><i></i></div>
    </section>

    <footer class="status">
        <pre class="coords">65.5966,  0.0010  , 0.0000</pre>
        <div class="toggles">
            <svg class="i"><path stroke-dasharray="1 2" stroke="#111" d="M1 3.500h12M1 6.500h12M1 9.500h12"/><path stroke="#111" stroke-dasharray="1 1" d="M13.500 2v11M1 12.500h13"/></svg>
            <svg class="i"><path stroke="#222" stroke-width=".9" d="M.5.500h15v15H.5zM4.500 0v16M8.500 0v16M12.500 0v16M0 4.500h16M0 8.500h16M0 12.500h16"/></svg>
            <svg class="i"><path stroke="#444" d="M1.500 1v13.500H15M1.500 9.500h5v5"/></svg>
            <svg class="i"><path stroke="#111" d="M12 8.500a5 4.500 0 1 1-3-4.500M5 8l8-6v8M5 8h9"/></svg>
            <svg class="i on"><path class="w" d="M2.500 2.500h12v12h-12z"/><circle class="w" cx="2" cy="2" r="2" stroke="#d33"/></svg>
            <svg class="i on"><path stroke="#111" d="M13 2L3 12.500h11"/></svg>
            <svg class="i"><path stroke="#333" d="M1.500 1v13.500H15M2 14L12 4"/><path fill="#f5b040" stroke="#d07010" d="M12 0l1 3 3 1-3 1-1 3-1-3-3-1 3-1z"/></svg>
            <svg class="i on"><path stroke="#111" stroke-width="1.500" d="M5 3v9M0 7.500h10"/><path class="w" stroke="#111" d="M8.500 9.500h6v3h-6z"/></svg>
            <svg class="i"><path stroke="#111" stroke-width="2" d="M8 1v13M2 8h12"/></svg>
            <svg class="i"><path class="w" stroke="#111" d="M4.500 2.500h8v11h-8z"/><path stroke="#111" stroke-dasharray="2 1" d="M6 5h5M6 8h5M6 11h5"/></svg>
        </div>
        <div class="toggles space-model">
            <svg class="i"><path class="w" stroke="#111" d="M2.500 1.500h11v10h-11zM5.500 4v5h5z"/><path stroke="#111" stroke-width="2" d="M1 14h14"/></svg>
            <svg class="i"><path class="w" stroke="#111" d="M.5 2.500h7v6h-7zM8.500 2.500h7v6h-7z"/><path stroke="#111" stroke-width="2" d="M1 12h14"/></svg>
        </div>
        <div class="toggles navigate">
            <svg class="i"><use href="#pan"/></svg><svg class="i"><use href="#glass"/></svg>
            <svg class="i"><circle cx="8" cy="8" r="7" fill="#ddd"/><circle cx="8" cy="8" r="3.500"/><path d="M3 3l10 10M13 3L3 13"/></svg>
            <svg class="i"><path class="w" d="M.5.500h4v3h-4zM6 .500h4v3H6zM11.500.500h4v3h-4zM3.500 5.500h9v10h-9z"/><path fill="#222" d="M6.500 8v5l3.500-2.500z"/></svg>
        </div>
        <div class="toggles viewport">
            <svg class="i on"><path stroke="#c33" stroke-dasharray="2 2" d="M.5 16V.500H16"/><path stroke="#235d95" stroke-width="1.500" fill="#cfe9ff" d="M5 5h10v10H5zM8 8h4v4H8zM1 1l4 4"/></svg>
        </div>
        <div class="toggles annotate">
            <svg class="i"><path class="w" d="M1 14l6-13 3 8M3 10l5-3"/><path class="b" d="M8 9l6 2-2 5h-4z"/></svg>
            <svg class="i"><path stroke="#ddd" stroke-width="1.500" d="M2 15l5-9 7 9M3 8l6-6 5 7M7 6v6"/></svg>
        </div>
        <div class="spacelabel"><svg class="i"><use href="#gear"/></svg>AutoCAD</div>
        <div class="toggles tray">
            <svg class="i"><path class="w" d="M2.500 7.500h10v8h-10z"/></svg>
            <svg class="i"><path class="g" d="M1.500 9.500h12v6h-12z"/></svg>
            <svg class="i"></svg>
            <svg class="i"><path class="w" d="M.5 1.500h14v14h-14z"/></svg>
        </div>
    </footer>

    <div class="taskbar">
        <i class="orb"></i><i class="ie"></i><i class="app t1"></i><i class="app t2"></i><i class="app t3"></i><i class="app t4"></i><i class="app t5"></i>
        <span class="clock">21:33</span>
    </div>

    <!-- floating widgets over the window -->
    <div class="meter"><i></i></div>
    <div class="ime">
        <span class="lang">英</span><span class="punct">·,</span><span class="simp">简</span>
        <svg viewBox="0 0 62 32"><path fill="#7a3f06" d="M0 12h62v8H0z"/><circle cx="19" cy="18" r="12" fill="#e0b400"/><circle cx="42" cy="18" r="12" fill="#e0b400"/><g fill="#fff" stroke="#9a9a9e" stroke-width="3"><circle cx="19" cy="16" r="11"/><circle cx="42" cy="16" r="11"/></g><circle cx="19" cy="15.500" r="3.800" fill="#6a3606"/><circle cx="42" cy="15.500" r="3.800" fill="#6a3606"/><circle cx="20" cy="14.500" r="1.200" fill="#fff"/><circle cx="43" cy="14.500" r="1.200" fill="#fff"/></svg>
    </div>
</body>
</html>
```
FILE: styles.css
```css
* {
    margin: 0;
    padding: 0;
    box-sizing: border-box;
}

body {
    width: 1920px;
    height: 1048px;
    overflow: hidden;
    position: relative;
    display: flex;
    flex-direction: column;
    background: #666;
    font-family: "Noto Sans", "Noto Sans CJK SC", sans-serif;
    font-size: 12px;
    color: #000;
}

.defs {
    position: absolute;
    width: 0;
    height: 0;
}

/* icons */
.i, .s {
    width: 23px;
    height: 22px;
    flex: none;
    display: block;
    overflow: visible;
    fill: none;
    stroke: #44474d;
    stroke-width: 1;
}

.i > *, .s > * { translate: 4px 3px; }
.w { fill: #fbfbfc; }
.g { fill: #a2a5ab; }
.b { fill: #abdcf8; stroke: #2467ae; }
.n { fill: #fff; stroke: #222; stroke-width: 1; }
.off { stroke: #9a9a9a; }

.dd {
    flex: none;
    align-self: center;
    border: solid transparent;
    border-width: 3px 3.5px 0;
    border-top-color: #777;
    width: 7px;
    margin: 0 2.5px;
}

.sep {
    width: 1px;
    height: 18px;
    margin: 2px 3px 0 2px;
    background: #8b8b8b;
    flex: none;
}

/* title bar */
.titlebar {
    height: 24px;
    flex: none;
    display: flex;
    background: #e3ffff;
    border-bottom: 1px solid #333;
}

.quick {
    width: 216px;
    padding-left: 44px;
    display: flex;
    background: linear-gradient(#a5a5a5, #7f7f7f);
    border: 1px solid #3a3a3a;
    border-bottom: 0;
}

.quick .i { stroke: #333; margin-top: -1px; }
.quick .off { stroke: #666; fill: #aaa; }
.quick .dd { border-top-color: #444; margin: 0 1px; }
.more { font-size: 9px; line-height: 22px; margin-left: 1px; }

.caption {
    flex: 1;
    padding-left: 504px;
    display: flex;
    gap: 24px;
    line-height: 23px;
    white-space: nowrap;
    letter-spacing: .15px;
}

.search {
    width: 328px;
    display: flex;
    background: linear-gradient(#a5a5a5, #7f7f7f);
    border: 1px solid #3a3a3a;
    border-bottom: 0;
}

.search b { width: 14px; font-size: 7px; line-height: 22px; padding-left: 4px; }
.search .i { stroke: #333; margin-top: -1px; }
.search .i > * { translate: 3px 3px; }
.search .dd { margin: 0 1px; border-top-color: #444; }

.field {
    width: 179px;
    background: #f6f6f6;
    padding-left: 3px;
    line-height: 24px;
    font-style: italic;
    font-size: 11.5px;
    letter-spacing: -.4px;
    color: #666;
}

.winbtns { width: 122px; padding-left: 16px; }
.winbtns svg {
    display: block;
    width: 102px;
    height: 17px;
    border: 1px solid #8aa;
    border-top: 0;
    border-radius: 0 0 5px 5px;
    background: #eaffff;
    stroke: #555;
    fill: none;
}

.appbtn {
    position: absolute;
    left: 0;
    top: 0;
    width: 41px;
    height: 41px;
    border: 1px solid #333;
    background: linear-gradient(#bbb, #6f6f6f);
}
.appbtn svg { display: block; width: 39px; height: 39px; }

/* menus */
.menubar {
    height: 21px;
    flex: none;
    padding-left: 55px;
    display: flex;
    gap: 24.6px;
    color: #fff;
    line-height: 22px;
    background: linear-gradient(#9b9b9b, #5b5b5b);
}
.menubar span { white-space: nowrap; flex: none; }
.docbtns { width: 52px; height: 16px; margin: 2px 0 0 auto; }

.plugins {
    width: 1597px;
    height: 28px;
    flex: none;
    padding-left: 11px;
    display: flex;
    gap: 11px;
    line-height: 31px;
    background: #f0f0f0;
    border-left: 3px dotted #c8cfe0;
    white-space: nowrap;
}
.plugins .ratio { width: 110px; }

/* docked toolbars */
.dock {
    display: flex;
    height: 24px;
    flex: none;
    margin-bottom: 5px;
}
.dock.first { margin-top: 1px; margin-bottom: 3px; }

.bar {
    display: flex;
    height: 24px;
    flex: none;
    border: 1px solid #3e3e3e;
    border-left: 0;
    background: linear-gradient(#f4f4f6, #dfe0e4);
}

.grip {
    width: 8px;
    flex: none;
    background-color: #555;
    background-image: radial-gradient(#111 40%, transparent 45%);
    background-size: 3px 3px;
    border: 1px solid #666;
}

.std { width: 670px; }
.std .sep { margin-left: 3px; margin-right: 2px; }
.styles { width: 600px; }
.styles .grip { margin-right: 1px; }
.styles .sep { margin: 2px 3px 0 3px; }
.views { width: 472px; }
.space { width: 230px; }
.layer { width: 402px; margin-left: 1px; }
.props { width: 581px; margin-left: 1px; }
.props .grip { margin-right: 1px; }
.solids { width: 534px; }
.solids .grip { width: 9px; }

.combo {
    width: 119px;
    height: 21px;
    flex: none;
    position: relative;
    display: flex;
    align-items: center;
    padding-left: 5px;
    background: #f5f5f5;
    border: 1px solid #b3b3b3;
    border-radius: 2px;
    color: #777;
    white-space: nowrap;
}
.combo::after {
    content: "";
    margin: 0 3px 0 auto;
    border: solid transparent;
    border-width: 5px 3.5px 0;
    border-top-color: #a0a0a0;
}
.combo em {
    width: 10px;
    height: 11px;
    border: 1px solid #111;
    background: #fff;
    margin-right: 3px;
}
.combo hr { border: 0; border-top: 1px solid #111; }

.pad { padding-left: 18px; }
.wide { width: 139px; margin-left: 1px; }
.cjk { width: 175px; padding-left: 9px; }
.layers { width: 300px; padding-left: 2px; }
.layers .s { width: 17px; }
.layers .s > * { translate: 1px 3px; }
.layers em { margin: 0 4px 0 2px; }
.song { font-family: "Liberation Serif", serif; font-size: 12px; color: #555; }
.color { width: 149px; }
.linetype { width: 160px; padding-left: 4px; }
.linetype hr { width: 60px; margin-right: 5px; }
.weight { width: 124px; padding-left: 4px; }
.weight hr { width: 35px; margin-right: 4px; }
.plot { width: 119px; padding-left: 9px; font-family: "Liberation Mono", monospace; font-size: 12px; letter-spacing: -1.2px; }

/* working area */
.work {
    height: 804px;
    flex: none;
    display: flex;
}

.side {
    width: 25px;
    flex: none;
    border: 1px solid #333;
    background: #ececee;
    margin-top: -1px;
}
.side .i > * { translate: 3px 3px; }
.draw { height: 427px; }
.hgrip {
    display: block;
    height: 8px;
    border: 1px solid #444;
    background-color: #666;
    background-image: radial-gradient(#111 40%, transparent 45%);
    background-size: 3px 3px;
}

.view {
    width: 1859px;
    height: 800px;
    margin-left: 4px;
    border-top: 1px solid #999;
    border-left: 1px solid #8d8d8d;
    border-right: 1px solid #fff;
}
.canvasrow { display: flex; height: 782px; }
.canvas { width: 1839px; height: 782px; flex: none; background: #a8a8a8; }
.ln { fill: none; stroke: #fff; }
.part { fill: none; stroke: #fff; stroke-width: 3; }
.part .red { stroke: #e0141c; }

.note {
    font-family: "Noto Sans CJK SC", sans-serif;
    font-weight: 300;
    font-size: 29px;
    fill: #de28ec;
}
.tip { font-family: "Noto Sans CJK SC", sans-serif; font-size: 12px; fill: #14145a; }

.vscroll {
    flex: 1;
    display: flex;
    flex-direction: column;
    background: linear-gradient(90deg, #e2e2e2, #f4f4f4);
}
.vscroll b, .hscroll b, .cmdscroll b { font-size: 6px; line-height: 18px; text-align: center; }
.vscroll i {
    width: 15px;
    height: 15px;
    margin: 147px auto auto;
    border: 1px solid #888;
    border-radius: 2px;
    background: linear-gradient(90deg, #f7f7f7, #c9c9c9);
}

.tabs {
    display: flex;
    height: 17px;
    background: #efefef;
    border-bottom: 1px solid #fff;
    line-height: 17px;
}
.tabnav { width: 57px; height: 15px; }
.tab {
    width: 41px;
    height: 15px;
    padding-left: 11px;
    white-space: nowrap;
    background: linear-gradient(72deg, transparent 3px, #777 4px, transparent 5px);
}
.tab.active {
    width: 53px;
    padding-left: 9px;
    color: #fff;
    background: #000;
    clip-path: polygon(0 0, 100% 0, 91% 100%, 9% 100%);
}
.tab.last {
    width: 50px;
    padding-left: 2px;
    background: linear-gradient(108deg, transparent 41px, #777 42px, transparent 43px);
}
.hscroll {
    width: 625px;
    margin-left: auto;
    margin-right: 17px;
    display: flex;
    background: #ececec;
    border-left: 1px solid #888;
}
.hscroll b { width: 24px; }
.hscroll b:last-child { width: 19px; }
.hscroll i {
    width: 14px;
    height: 14px;
    margin: 1px 148px 0 auto;
    border: 1px solid #888;
    border-radius: 2px;
    background: linear-gradient(#f7f7f7, #c9c9c9);
}

.right { width: 28px; padding-left: 3px; }
.right .side { height: 384px; }
.right .order { height: 98px; margin-top: 0; }

/* command line */
.command {
    height: 84px;
    flex: none;
    display: flex;
    background: #fff;
    border-bottom: 1px solid #777;
}
.cmdgrip {
    width: 15px;
    background: radial-gradient(#222 35%, transparent 45%) 2px 3px / 3px 3px repeat-x, #999;
    border-radius: 0 4px 4px 0;
}
.cmdtext {
    flex: 1;
    padding-left: 2px;
    font-family: "Noto Sans CJK SC", sans-serif;
    font-size: 16px;
    font-weight: 300;
}
.cmdtext p {
    height: 16.2px;
    line-height: 12px;
    white-space: pre;
}
.cmdtext s {
    font-family: "Liberation Mono", monospace;
    font-size: 13.33px;
    line-height: 1;
    text-decoration: none;
}
.cmdtext .prompt {
    height: 18px;
    margin-left: -2px;
    padding-left: 2px;
    border-top: 1px solid #888;
    line-height: 16px;
}
.cmdscroll { width: 16px; background: #f0f0f0; display: flex; flex-direction: column; }
.cmdscroll i {
    height: 14px;
    margin-top: 14px;
    border: 1px solid #888;
    border-radius: 2px;
    background: linear-gradient(90deg, #f7f7f7, #c9c9c9);
}

/* status bar */
.status {
    height: 23px;
    flex: none;
    display: flex;
    background: linear-gradient(#9a9a9a, #757575);
    border-bottom: 1px solid #333;
}
.coords {
    width: 205px;
    flex: none;
    padding-left: 11px;
    font-family: "Liberation Mono", monospace;
    font-size: 12px;
    letter-spacing: -1.2px;
    line-height: 26px;
}
.toggles { display: flex; flex: none; border-left: 1px solid #555; }
.toggles .i {
    width: 22px;
    height: 22px;
    background: linear-gradient(#b5b5b5, #8f8f8f);
    border-right: 1px solid #555;
}
.toggles .i > * { translate: 2px 3px; }
.toggles .on { background: linear-gradient(#d5edf4, #8fc0ce); }
.space-model { margin-left: 1011px; }
.navigate { margin-left: 17px; }
.viewport { margin-left: 49px; }
.annotate { margin-left: 13px; }
.spacelabel {
    display: flex;
    flex: none;
    width: 104px;
    margin-left: 4px;
    line-height: 25px;
    font-family: "Liberation Serif", serif;
    background: #a0a0a0;
}
.spacelabel .i { width: 21px; }
.spacelabel .i > * { translate: 2px 3px; }
.tray { overflow: hidden; }

/* taskbar */
.taskbar {
    height: 7px;
    flex: none;
    display: flex;
    overflow: hidden;
    background: linear-gradient(90deg, #1b6fae, #2a8ad0 25%, #5ab0e6 55%, #2a6fc0 70%, #0c4a96 85%, #1a4a86);
}
.orb { width: 35px; height: 7px; margin: 1px 55px 0 10px; border-radius: 17px 17px 0 0; background: #a9c8dd; flex: none; }
.ie { width: 24px; height: 5px; margin: 2px 14px 0 0; border-radius: 50% 50% 0 0; background: #e5c83a; flex: none; }
.app { width: 58px; margin-right: 3px; background: radial-gradient(circle at 50% 130%, #fff 12px, #b5dcf2 14px); border: solid #164a78; border-width: 0 1px; }
.t2 { background: radial-gradient(circle at 50% 100%, #fff 9px, #2b80c0 11px); }
.t3 { background: radial-gradient(circle at 50% 100%, #c8453c 6px, #d5e8f2 8px); }
.t4 { background: #7fb6d8; }
.t5 { background: radial-gradient(circle at 50% 120%, #8a2450 12px, #9cc7e2 14px); }
.clock { margin: 2px 37px 0 auto; color: #fff; line-height: 13px; }

/* overlays */
.meter {
    position: absolute;
    left: 1911px;
    top: 700px;
    width: 12px;
    height: 59px;
    border: 1px solid #1c1c34;
    border-radius: 4px;
    background: #3f4161;
    padding: 6px 0 0 2px;
}
.meter i {
    display: block;
    width: 5px;
    height: 46px;
    background: repeating-linear-gradient(transparent 0 2px, #2c2e48 2px 3px), linear-gradient(#20223c 22px, #d8dc4a 22px, #7fd08a 32px, #6fd8d0);
}

.ime {
    position: absolute;
    left: 1757px;
    top: 987px;
    width: 159px;
    height: 48px;
    display: flex;
    align-items: flex-start;
    padding: 5px 0 0 9px;
    border-radius: 9px;
    background: #ffe01c;
    box-shadow: inset 0 -6px 0 #f5c400, 0 2px 4px rgba(0,0,0,.35);
    font-family: "Noto Sans CJK SC", sans-serif;
    font-size: 22px;
    line-height: 31px;
    color: #7a3f06;
}
.lang { width: 31px; }
.punct { width: 21px; font-size: 18px; color: #b09848; }
.simp { width: 30px; color: #a99a58; }
.ime svg { width: 62px; height: 32px; }
```
